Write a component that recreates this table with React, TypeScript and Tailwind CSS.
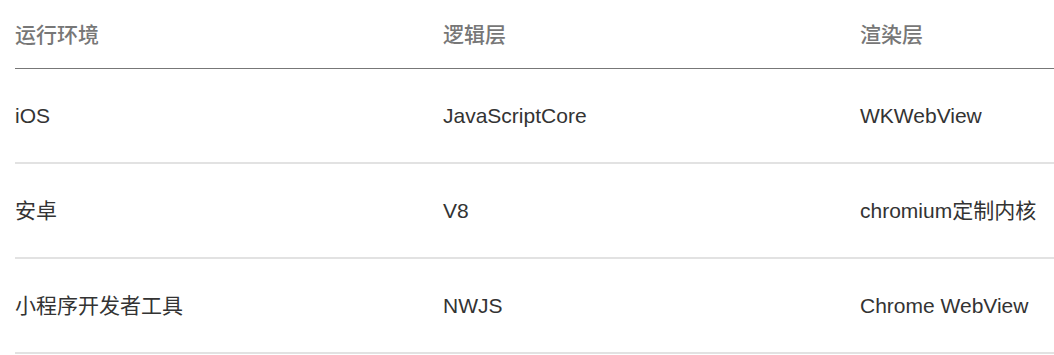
export default function App() {
  const rows = [
    ["iOS", "JavaScriptCore", "WKWebView"],
    ["安卓", "V8", "chromium定制内核"],
    ["小程序开发者工具", "NWJS", "Chrome WebView"],
  ];
  const font = { fontFamily: '"Liberation Sans", "Noto Sans CJK SC", sans-serif' };
  return (
    <div className="w-[1054px] h-[355px] bg-white pl-[15px]" style={font}>
      <div className="grid grid-cols-[428px_417px_1fr] h-[69px] items-center pt-[2px] border-b border-[#777777] text-[21px] text-[#777777] font-medium">
        <div>运行环境</div>
        <div>逻辑层</div>
        <div>渲染层</div>
      </div>
      {rows.map((r, i) => (
        <div
          key={i}
          className="grid grid-cols-[428px_417px_1fr] h-[95px] items-center border-b-2 border-[#e2e2e2] text-[21px] text-[#333333]"
        >
          <div>{r[0]}</div>
          <div>{r[1]}</div>
          <div className="whitespace-nowrap">{r[2]}</div>
        </div>
      ))}
    </div>
  );
}
